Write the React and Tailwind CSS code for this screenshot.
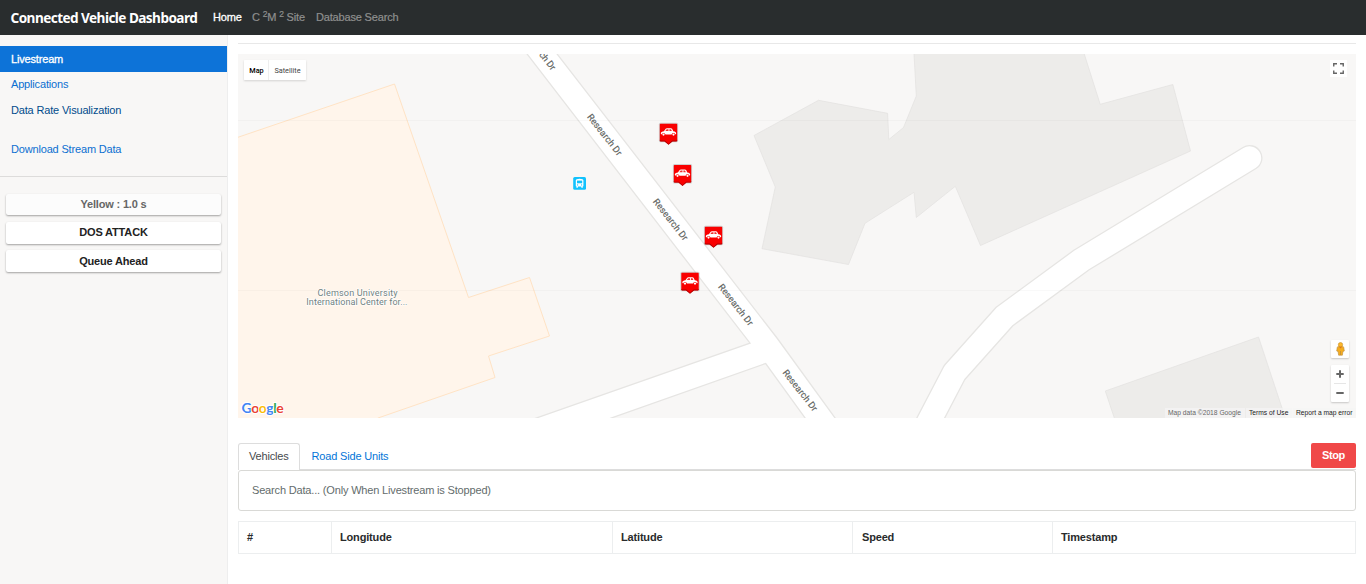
const markers = [
  [668.5, 123.8],
  [682.5, 165],
  [713.5, 226.8],
  [690, 272.8],
];

const roadLabels = [
  [604.7, 134.6, 'Research Dr'],
  [670.6, 219.5, 'Research Dr'],
  [735.8, 304.6, 'Research Dr'],
  [800.2, 390.3, 'Research Dr'],
];

const googleLetters = [
  ['G', '#4285f4'],
  ['o', '#ea4335'],
  ['o', '#fbbc05'],
  ['g', '#4285f4'],
  ['l', '#34a853'],
  ['e', '#ea4335'],
];

function CarMarker({ x, y }) {
  return (
    <g transform={`translate(${x} ${y})`}>
      <rect x="-9.6" y="-1" width="19.2" height="19.4" rx="1.5" fill="#000" opacity="0.16" />
      <path d="M-8 0H8Q8.7 0 8.7 .8V16.6Q8.7 17.4 8 17.4H4L0 20.8L-4 17.4H-8Q-8.7 17.4 -8.7 16.6V.8Q-8.7 0 -8 0Z" fill="#f90000" />
      <path d="M-8.7 16V16.8Q-8.7 17.6 -8 17.6H-4L0 21L4 17.6H8Q8.7 17.6 8.7 16.8V16L8 16.8H3.6L0 19.9L-3.6 16.8H-8Z" fill="#b00000" />
      <path d="M-7.7 9.9C-7.7 8.3 -6.4 7.6 -4.6 7.5L-2.8 5Q-2.4 4.4 -1.6 4.4H2.4Q3.2 4.4 3.6 5L4.8 7.4C6.8 7.6 7.7 8.3 7.7 9.9L6.9 10.7A2 2 0 0 0 3.1 10.7H-3A2 2 0 0 0 -6.9 10.7Z" fill="#fff" />
      <path d="M-3.2 7.3L-1.8 5.5H0V7.3ZM.9 7.3V5.5H2.5L3.4 7.3Z" fill="#f23030" />
      <circle cx="-5" cy="10.8" r="1.1" fill="#fff" />
      <circle cx="5" cy="10.8" r="1.1" fill="#fff" />
    </g>
  );
}

function MapCanvas() {
  return (
    <svg className="block h-[364px] w-full" viewBox="238 54 1118 364" fontFamily="Roboto, sans-serif">
      <rect x="238" y="54" width="1118" height="364" fill="#f8f7f6" />
      <path d="M230 140L394.5 84L468.5 297.5L529.5 277.5L549.5 336L488.5 356L495 377.5L378 418L370 425H230Z" fill="#fff5eb" stroke="#ffe3c5" strokeWidth="1" />
      <g fill="#edecea" stroke="#e2e1df" strokeWidth="0.7">
        <path d="M913.8 50L916.3 96L903.5 127.5L888.8 139.5L887.6 113.3L818.5 100.3L754 135.5L775.3 187L762 248.7L848.5 264.5L865 223.3L914 192.3L916.3 217.5L955.3 186.3L980.5 245.5L1190.5 151L1172.8 84.5L1100.2 104.3L1083 50Z" />
        <path d="M1115 420L1105.3 391L1258.5 337L1286 420Z" />
      </g>
      <g fill="none" strokeLinejoin="round" strokeLinecap="round">
        <path d="M925 429L954.5 372.5L1004.5 316.5L1081.5 260L1249.5 158" stroke="#e6e5e3" strokeWidth="26" />
        <path d="M925 429L954.5 372.5L1004.5 316.5L1081.5 260L1249.5 158" stroke="#fff" strokeWidth="23.4" />
      </g>
      <path d="M524 50L750 343.2L525 422H600L765.7 363.5L808 422H838L777 338L554 50Z" fill="#fff" stroke="#e6e5e3" strokeWidth="1.3" />
      <path d="M238 120.5H1356M238 290.5H1356" stroke="#000" strokeOpacity="0.025" />

      <g fontSize="9.2" fill="#5e6360" stroke="#5e6360" strokeWidth="0.15">
        <text transform="translate(551.4 70.8) rotate(51.8)" textAnchor="end">ch Dr</text>
        {roadLabels.map(([x, y, name]) => (
          <text key={x} transform={`translate(${x} ${y}) rotate(51.8)`} textAnchor="middle" y="3.2" textLength="50">
            {name}
          </text>
        ))}
      </g>

      <g fontSize="9.1" fill="#71827f" textAnchor="middle" stroke="#fff" strokeWidth="1.2" paintOrder="stroke">
        <text x="357.5" y="296.2" textLength="80">Clemson University</text>
        <text x="356.8" y="305.2" textLength="101">International Center for...</text>
      </g>

      <g>
        <rect x="573.2" y="177" width="12.8" height="12.8" rx="1.5" fill="#12c2fd" />
        <path d="M575.8 180.5Q575.8 178.8 579.6 178.8T583.4 180.5V186.2H582.8V187.8H581.3V186.6H577.9V187.8H576.4V186.2H575.8Z" fill="#fff" />
        <path d="M577 180.6H582.2V183.3H577Z" fill="#12c2fd" />
        <circle cx="577.6" cy="184.9" r=".6" fill="#12c2fd" />
        <circle cx="581.6" cy="184.9" r=".6" fill="#12c2fd" />
      </g>

      {markers.map(([x, y]) => <CarMarker key={x} x={x} y={y} />)}

      <text x="241.5" y="412.8" fontFamily="Lato, sans-serif" fontSize="14" textLength="42" stroke="#fff" strokeWidth="2" paintOrder="stroke" fontWeight="700">
        {googleLetters.map(([letter, color], i) => <tspan key={i} fill={color}>{letter}</tspan>)}
      </text>
    </svg>
  );
}

function MapControls() {
  return (
    <>
      <div className="absolute top-1.5 left-1.5 flex h-5 font-[Roboto,sans-serif] text-[7.3px] leading-[21px] tracking-normal shadow-[0_1px_2px_rgba(0,0,0,0.15)]">
        <div className="w-[25px] rounded-l-[1px] border-r border-[#eee] bg-white pl-px text-center font-medium text-black">Map</div>
        <div className="w-[37px] rounded-r-[1px] bg-white text-center text-[#454545]">Satellite</div>
      </div>
      <div className="absolute top-1.5 right-[9px] flex size-[17px] items-center justify-center bg-white">
        <svg className="size-[11px]" viewBox="0 0 11 11" fill="none" stroke="#666" strokeWidth="1.4">
          <path d="M.75 3.5V.75H4M7 .75H10.25V3.5M10.25 7.5V10.25H7M4 10.25H.75V7.5" />
        </svg>
      </div>
      <div className="absolute right-[7px] bottom-4 flex w-[18px] flex-col gap-[7px]">
        <div className="flex h-[18px] items-center justify-center rounded-[1px] bg-white shadow-[0_1px_2px_rgba(0,0,0,0.2)]">
          <svg className="h-[14px] w-[9px]" viewBox="0 0 9 14">
            <path d="M1.2 5.7Q1.2 4.6 2.4 4.6H6.6Q7.8 4.6 7.8 5.7L8.3 9L6.9 9.6L6.4 13.2H2.6L2.1 9.6L.7 9Z" fill="#f5ad20" stroke="#b98a3c" strokeWidth=".6" />
            <circle cx="4.5" cy="2.7" r="2.2" fill="#fcb72a" stroke="#c58e2d" strokeWidth=".6" />
            <path d="M3 4.8L4.5 6.5L6 4.8Z" fill="#e1731b" />
            <path d="M4.5 9V13" stroke="#b98a3c" strokeWidth=".7" />
          </svg>
        </div>
        <div className="flex h-[37px] flex-col items-center rounded-[1px] bg-white shadow-[0_1px_2px_rgba(0,0,0,0.2)]">
          <svg className="h-[37px] w-[18px]" viewBox="0 0 18 37" fill="none">
            <path d="M5.3 9H12.7M9 5.3V12.7M5.3 28H12.7" stroke="#666" strokeWidth="2" />
            <path d="M3 18.5H15" stroke="#e6e6e6" />
          </svg>
        </div>
      </div>
      <div className="absolute right-0 bottom-0 flex h-2.5 gap-px text-[6.7px] leading-[10px] tracking-normal whitespace-nowrap text-[#222]">
        <span className="w-20 bg-[#f5f5f5]/70 pl-[3px] text-[#666]">Map data ©2018 Google</span>
        <span className="w-[46px] bg-[#f5f5f5]/70 pl-[3px]">Terms of Use</span>
        <span className="w-[63px] bg-[#f5f5f5]/70 pl-[3px]">Report a map error</span>
      </div>
    </>
  );
}

function SideButton({ children, className }) {
  return (
    <button className={`rounded-[2px] text-center text-[11px] font-bold shadow-[0_1px_2px_rgba(0,0,0,0.35)] ${className}`}>
      {children}
    </button>
  );
}

export default function App() {
  return (
    <div className="flex h-[584px] w-[1366px] flex-col overflow-hidden bg-white font-['Liberation_Sans',Arial,sans-serif] text-[11px] tracking-[-0.17px] text-[#292b2c]">
      <header className="flex h-[35px] shrink-0 items-center bg-[#292d2e] pl-[10.5px] text-[#8f908f]">
        <h1 className="w-[202.5px] pt-px font-['Noto_Sans',sans-serif] text-[13.6px] font-bold tracking-[-0.56px] whitespace-nowrap text-white">Connected Vehicle Dashboard</h1>
        <nav className="flex gap-[11px] whitespace-nowrap">
          <a className="w-[28px] text-white [-webkit-text-stroke:0.3px_white]">Home</a>
          <a className="w-[53px] [-webkit-text-stroke:0.2px_#8f908f]">C <sup className="text-[8.5px]">2</sup>M <sup className="text-[8.5px]">2</sup> Site</a>
          <a className="[-webkit-text-stroke:0.2px_#8f908f]">Database Search</a>
        </nav>
      </header>
      <div className="flex min-h-0 flex-1">
        <aside className="w-[228px] shrink-0 border-r border-[#eee] bg-[#f8f7f6] pt-[11px]">
          <nav className="flex flex-col text-[#0c6fd1]">
            <a className="h-[26px] bg-[#0d73d8] pl-[11px] leading-[26px] text-white [-webkit-text-stroke:0.3px_white]">Livestream</a>
            <a className="h-[25px] pl-[11px] leading-[25px]">Applications</a>
            <a className="h-[26px] pl-[11px] leading-[26px] text-[#014c8c]">Data Rate Visualization</a>
            <a className="mt-[13px] h-[26px] pl-[11px] leading-[26px]">Download Stream Data</a>
          </nav>
          <hr className="mt-[14px] border-[#dddcdb]" />
          <div className="mt-[17px] flex flex-col px-1.5">
            <SideButton className="h-[21px] bg-[#fcfcfc] text-[#666]">Yellow : 1.0 s</SideButton>
            <SideButton className="mt-[7px] h-[22px] bg-white pb-[2px] text-[#222]">DOS ATTACK</SideButton>
            <SideButton className="mt-1.5 h-[22px] bg-white pt-px text-[#222]">Queue Ahead</SideButton>
          </div>
        </aside>
        <main className="flex flex-1 flex-col pt-2 pr-2.5 pl-2.5">
          <hr className="border-[#e8e8e8]" />
          <section className="relative mt-2.5 h-[364px]">
            <MapCanvas />
            <MapControls />
          </section>
          <div className="mt-[25px] flex h-[27px] items-start justify-between border-b border-[#ddd]">
            <div className="flex">
              <div className="h-[27px] w-[62px] rounded-t-[3px] border border-b-0 border-[#ddd] bg-white pl-2.5 leading-[25px] text-[#464a4c]">Vehicles</div>
              <div className="pl-[11.5px] leading-[27px] text-[#0275d8]">Road Side Units</div>
            </div>
            <button className="h-[25px] w-[45px] rounded-[2px] bg-[#f04848] text-[11px] font-bold tracking-[-0.4px] text-white">Stop</button>
          </div>
          <div className="h-[41px] rounded-[3px] border border-[#d9d9d6] pl-[13px] leading-[39px] text-[#636c6c]">Search Data... (Only When Livestream is Stopped)</div>
          <div className="mt-2.5 grid h-[33px] grid-cols-[93px_281px_240px_200px_1fr] border border-[#eceeef] font-bold leading-[31px]">
            <div className="border-r border-[#eceeef] pl-2">#</div>
            <div className="border-r border-[#eceeef] pl-2">Longitude</div>
            <div className="border-r border-[#eceeef] pl-2">Latitude</div>
            <div className="border-r border-[#eceeef] pl-[9px]">Speed</div>
            <div className="pl-2">Timestamp</div>
          </div>
        </main>
      </div>
    </div>
  );
}
